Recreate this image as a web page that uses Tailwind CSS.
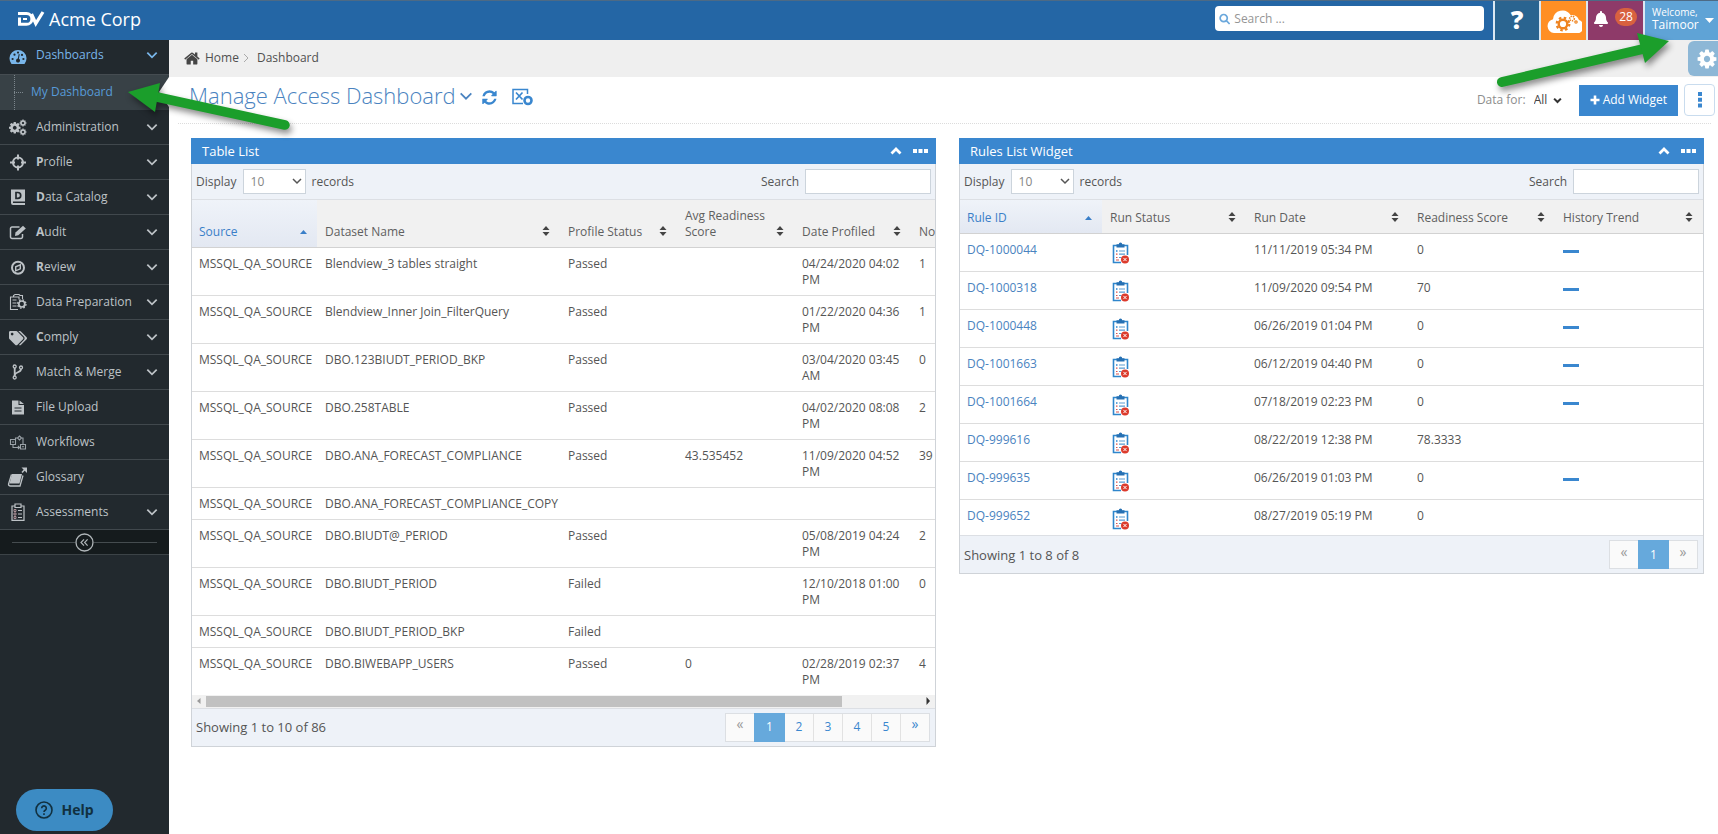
<!DOCTYPE html>
<html lang="en">
<head>
  <meta charset="UTF-8">
  <meta name="viewport" content="width=device-width, initial-scale=1.0">
  <title>Manage Access Dashboard</title>
  <script src="https://cdn.jsdelivr.net/npm/@tailwindcss/browser@4"></script>
</head>
<body class="relative flex flex-col min-h-screen bg-white text-[12px] leading-4 text-[#555] font-['Open_Sans',sans-serif]">

  <!-- Shared icons -->
  <svg class="hidden">
    <symbol id="down" viewBox="0 0 12 12"><path d="M2 4l4 4 4-4" fill="none" stroke="currentColor" stroke-width="1.500"/></symbol>
    <symbol id="up" viewBox="0 0 12 12"><path d="M1.500 8.500L6 4l4.500 4.500" fill="none" stroke="currentColor" stroke-width="2.800"/></symbol>
    <symbol id="dots" viewBox="0 0 16 4"><path d="M0 0h4v4H0zM5.500 0h4v4h-4zM11 0h4v4h-4z" fill="currentColor"/></symbol>
    <symbol id="sort" viewBox="0 0 8 10"><path d="M4 0l3.500 4h-7zM4 10L.5 6h7z" fill="currentColor"/></symbol>
    <symbol id="cog" viewBox="0 0 1792 1792"><path fill="currentColor" d="M1152 896q0-106-75-181t-181-75-181 75-75 181 75 181 181 75 181-75 75-181zm512-109v222q0 12-8 23t-20 13l-185 28q-19 54-39 91 35 50 107 138 10 12 10 25t-9 23q-27 37-99 108t-94 71q-12 0-26-9l-138-108q-44 23-91 38-16 136-29 186-7 28-36 28h-222q-14 0-24.500-8.500t-11.500-21.500l-28-184q-49-16-90-37l-141 107q-10 9-25 9-14 0-25-11-126-114-165-168-7-10-7-23 0-12 8-23 15-21 51-66.500t54-70.500q-27-50-41-99l-183-27q-13-2-21-12.500t-8-23.500v-222q0-12 8-23t19-13l186-28q14-46 39-92-40-57-107-138-10-12-10-24 0-10 9-23 26-36 98.500-107.500t94.500-71.500q13 0 26 10l138 107q44-23 91-38 16-136 29-186 7-28 36-28h222q14 0 24.500 8.500t11.500 21.500l28 184q49 16 90 37l142-107q9-9 24-9 13 0 25 10 129 119 165 170 7 8 7 22 0 12-8 23-15 21-51 66.500t-54 70.500q26 50 41 98l183 28q13 2 21 12.500t8 23.500z"/></symbol>
    <symbol id="failed-run" viewBox="0 0 17 22">
      <path d="M15.500 13V3.500h-14v17H9" fill="none" stroke="#2f86cc" stroke-width="1.600"/>
      <path d="M4.500 2.200h2.300a1.700 1.700 0 0 1 3.400 0h2.300v3.300h-8z" fill="#2670b3"/>
      <path d="M7 9h6M7 12.200h6M7 15.500h2.500" stroke="#5a9bd2" stroke-width="1.200"/>
      <path d="M4 9h1.500" stroke="#2f86cc" stroke-width="1.300"/>
      <path d="M4 12.200h1.500M4 15.500h1.500M4 18h3" stroke="#d9534f" stroke-width="1.200"/>
      <circle cx="13" cy="17.500" r="4" fill="#dc3a2c"/>
      <path d="M11.400 15.900l3.200 3.200m0-3.200l-3.200 3.200" stroke="#fff" stroke-width="1"/>
    </symbol>
  </svg>

  <!-- Top bar -->
  <header class="flex items-stretch h-10 bg-[#2466a5] border-t border-[#4d6a85] text-white">
    <a href="#" class="flex items-center gap-1 pl-[17px] pb-1 text-[18px] leading-6">
      <svg class="w-7 h-4" viewBox="0 0 28 16" fill="none" stroke="#fff">
        <path d="M1 2.500h8.500a5.200 5.200 0 0 1 0 10.800H2.500V6.500" stroke-width="3"/>
        <path d="M6 8h4" stroke-width="2"/>
        <path d="M14.500 3l4.300 9.500L26 1" stroke-width="3.200"/>
      </svg>
      Acme Corp
    </a>
    <label class="flex items-center gap-1 ml-auto mr-[9px] mt-[5px] w-[269px] h-[25px] px-1 rounded-sm bg-white">
      <svg class="w-3 h-3 text-[#6ba8dc]" viewBox="0 0 12 12" fill="none" stroke="currentColor" stroke-width="1.800"><circle cx="5" cy="5" r="3.800"/><path d="M7.800 7.800l3.500 3.500"/></svg>
      <input type="text" aria-label="Search" placeholder="Search ..." class="w-full text-[#555] placeholder:text-[#959595] outline-none">
    </label>
    <button aria-label="Help topics" class="w-[46px] pb-1 bg-[#2a6490] border-l-2 border-[#dbe8f3] text-[25px] font-extrabold">?</button>
    <button aria-label="Cloud services" class="flex items-center justify-center w-[47px] bg-[#ff8f24] border-l-2 border-[#dbe8f3]">
      <svg class="w-9 h-6" viewBox="0 0 36 24">
        <path d="M8 24a7 7 0 0 1-1-13.800A9.500 9.500 0 0 1 24.500 6 8 8 0 0 1 33 11a6.800 6.800 0 0 1-4.500 13z" fill="#fff"/>
        <g stroke="#ef8420" fill="none">
          <circle cx="17" cy="15" r="4.300" stroke-width="2.400"/>
          <circle cx="17" cy="15" r="6.300" stroke-width="2.200" stroke-dasharray="2.500 2.450"/>
          <circle cx="26" cy="9.500" r="2.300" stroke-width="1.600" stroke-dasharray="1.300 .8"/>
          <circle cx="30" cy="13" r="1.200" stroke-width="1.200"/>
        </g>
      </svg>
    </button>
    <button aria-label="Notifications" class="flex items-center justify-center gap-[7px] w-[57px] pb-1 bg-[#8e3a69] border-l-2 border-[#dbe8f3]">
      <svg class="w-[14px] h-4" viewBox="0 0 448 512" fill="#fff"><path d="M224 512c35.320 0 63.970-28.650 63.970-64H160.030c0 35.350 28.650 64 63.970 64zm215.390-149.710c-19.320-20.760-55.470-51.990-55.470-154.290 0-77.700-54.480-139.900-127.940-155.160V32c0-17.670-14.320-32-31.980-32s-31.980 14.330-31.980 32v20.840C118.560 68.100 64.080 130.300 64.080 208c0 102.300-36.150 133.530-55.470 154.290-6 6.450-8.660 14.160-8.610 21.710.11 16.400 12.980 32 32.100 32h383.800c19.120 0 32-15.600 32.100-32 .05-7.550-2.610-15.270-8.610-21.710z"/></svg>
      <span class="px-1 rounded-full bg-[#d8613f] text-[12px] leading-[18px] mb-1">28</span>
    </button>
    <button class="flex items-center justify-between w-[75px] pl-[7px] pr-1 bg-[#5fa3d6] border-l-2 border-[#dbe8f3] text-left">
      <span class="pb-1"><span class="block text-[10px] leading-3">Welcome,</span><span class="block leading-[14px]">Taimoor</span></span>
      <svg class="w-[9px] h-[5px]" viewBox="0 0 9 5"><path d="M0 0h9L4.500 5z" fill="#fff"/></svg>
    </button>
  </header>

  <div class="flex flex-1">

    <!-- Sidebar -->
    <nav class="w-[169px] shrink-0 bg-[#22292e] text-[#bdc2c6]">
      <ul>
        <li>
          <a href="#" class="flex items-center h-[35px] pl-[9px] pr-[10px] pb-1 text-[#79b6ea] border-b border-[#454c51]">
            <svg class="w-[18px] h-[18px] mt-1 mr-[9px]" viewBox="0 0 18 18"><path d="M2.500 16A8.500 8.500 0 1 1 15.500 16z" fill="currentColor"/><g fill="#22292e"><circle cx="3.600" cy="11" r="1.100"/><circle cx="5.500" cy="6.700" r="1.100"/><circle cx="9" cy="4.600" r="1.100"/><circle cx="14.400" cy="11" r="1.100"/><circle cx="13" cy="6.900" r="1.100"/><path d="M9.700 6l1 .2-.8 4.600a2 2 0 1 1-1-.2z"/></g></svg>
            <span class="flex-1">Dashboards</span>
            <svg class="w-[14px] h-[14px]"><use href="#down"/></svg>
          </a>
          <div class="relative flex items-center h-[35px] pl-[14px] bg-[#384146]">
            <span class="self-stretch w-2 border-l border-dotted border-[#7c868c]"></span>
            <span class="w-[9px] -ml-2 border-t border-dotted border-[#7c868c]"></span>
            <a href="#" class="pl-2 pb-[2px] text-[#579bd8]">My Dashboard</a>
            <svg class="absolute right-0 top-[2px] w-[10px] h-[30px]" viewBox="0 0 10 30"><path d="M10 0v30L0 15z" fill="#fff"/></svg>
          </div>
        </li>
        <li><a href="#" class="flex items-center h-[35px] pl-[9px] pr-[10px] border-b border-[#41484d]">
          <svg class="w-[18px] h-[18px] mr-[9px]" viewBox="0 0 18 18"><use href="#cog" x="-1" y="3" width="13.500" height="13.500"/><use href="#cog" x="10" y="1" width="8" height="8"/><use href="#cog" x="10" y="10" width="8" height="8"/></svg>
          <span class="flex-1">Administration</span><svg class="w-[14px] h-[14px]"><use href="#down"/></svg></a></li>
        <li><a href="#" class="flex items-center h-[35px] pl-[9px] pr-[10px] border-b border-[#41484d]">
          <svg class="w-[18px] h-[18px] mr-[9px]" viewBox="0 0 18 18" fill="none" stroke="currentColor" stroke-width="2"><circle cx="9" cy="9.500" r="5"/><path d="M9 1.500v5M9 12.500v5M1 9.500h5M12 9.500h5"/></svg>
          <span class="flex-1"><b>P</b>rofile</span><svg class="w-[14px] h-[14px]"><use href="#down"/></svg></a></li>
        <li><a href="#" class="flex items-center h-[35px] pl-[9px] pr-[10px] border-b border-[#41484d]">
          <svg class="w-[18px] h-[18px] mr-[9px]" viewBox="0 0 18 18"><path d="M2 1.500h14v12H4v1.500h12v2H4a2 2 0 0 1-2-2z" fill="currentColor"/><path d="M7 4.500h1.800a2.900 2.900 0 0 1 0 5.800H7z" fill="none" stroke="#22292e" stroke-width="1.700"/></svg>
          <span class="flex-1"><b>D</b>ata Catalog</span><svg class="w-[14px] h-[14px]"><use href="#down"/></svg></a></li>
        <li><a href="#" class="flex items-center h-[35px] pl-[9px] pr-[10px] border-b border-[#41484d]">
          <svg class="w-[18px] h-[18px] mr-[9px]" viewBox="0 0 18 18" fill="none" stroke="currentColor"><path d="M10.500 4H3a1.500 1.500 0 0 0-1.500 1.500V14A1.500 1.500 0 0 0 3 15.500h9a1.500 1.500 0 0 0 1.500-1.500v-3" stroke-width="1.500"/><path d="M6.500 9.500l7.500-6.800 2.800 2.700-7.500 6.800-3.300.8z" fill="currentColor" stroke="none"/></svg>
          <span class="flex-1"><b>A</b>udit</span><svg class="w-[14px] h-[14px]"><use href="#down"/></svg></a></li>
        <li><a href="#" class="flex items-center h-[35px] pl-[9px] pr-[10px] border-b border-[#41484d]">
          <svg class="w-[18px] h-[18px] mr-[9px]" viewBox="0 0 18 18" fill="none" stroke="currentColor"><circle cx="9" cy="9.700" r="6" stroke-width="2"/><path d="M11.300 6.800v4l-4.600 2v-4z" stroke-width="1.400"/></svg>
          <span class="flex-1"><b>R</b>eview</span><svg class="w-[14px] h-[14px]"><use href="#down"/></svg></a></li>
        <li><a href="#" class="flex items-center h-[35px] pl-[9px] pr-[10px] border-b border-[#41484d]">
          <svg class="w-[18px] h-[18px] mr-[9px]" viewBox="0 0 18 18" fill="none" stroke="currentColor" stroke-width="1.100"><path d="M4.500 4V2.500l1.500-1h4l1 1h2.500V6M9 16.500H1.500V4h8.500v2.500M3.500 7h4M3.500 10h4M3.500 13h4"/><circle cx="12.800" cy="11" r="3" stroke-width="1.700"/><circle cx="12.800" cy="11" r="4.200" stroke-width="1.300" stroke-dasharray="1.700 1.600"/></svg>
          <span class="flex-1">Data Preparation</span><svg class="w-[14px] h-[14px]"><use href="#down"/></svg></a></li>
        <li><a href="#" class="flex items-center h-[35px] pl-[9px] pr-[10px] border-b border-[#41484d]">
          <svg class="w-[18px] h-[18px] mr-[9px]" viewBox="0 -40 640 512" fill="currentColor"><path d="M497.941 225.941L286.059 14.059A48 48 0 0 0 252.118 0H48C21.490 0 0 21.490 0 48v204.118a48 48 0 0 0 14.059 33.941l211.882 211.882c18.744 18.745 49.136 18.746 67.882 0l204.118-204.118c18.745-18.745 18.745-49.137 0-67.882zM112 160c-26.510 0-48-21.490-48-48s21.490-48 48-48 48 21.490 48 48-21.490 48-48 48zm513.941 133.823L421.823 497.941c-18.745 18.745-49.137 18.745-67.882 0l-.36-.36L527.640 323.522c16.999-16.999 26.362-39.600 26.362-63.640s-9.362-46.641-26.362-63.640L331.397 0h48.721a48 48 0 0 1 33.941 14.059l211.882 211.882c18.745 18.745 18.745 49.137 0 67.882z"/></svg>
          <span class="flex-1"><b>C</b>omply</span><svg class="w-[14px] h-[14px]"><use href="#down"/></svg></a></li>
        <li><a href="#" class="flex items-center h-[35px] pl-[9px] pr-[10px] border-b border-[#41484d]">
          <svg class="w-[18px] h-[18px] mr-[9px]" viewBox="0 0 18 18" fill="none" stroke="currentColor"><g stroke-width="1.300"><circle cx="5.700" cy="3.500" r="1.500"/><circle cx="12" cy="4.500" r="1.500"/><circle cx="5.700" cy="14.500" r="1.500"/></g><path d="M5.700 5v8M12 6c0 4-5.500 2.500-6.300 6" stroke-width="1.800"/></svg>
          <span class="flex-1">Match &amp; Merge</span><svg class="w-[14px] h-[14px]"><use href="#down"/></svg></a></li>
        <li><a href="#" class="flex items-center h-[35px] pl-[9px] pr-[10px] border-b border-[#41484d]">
          <svg class="w-[18px] h-[18px] mr-[9px]" viewBox="0 0 18 18"><path d="M3 2.500h6.500V7H15v9.500H3zM10.500 2.500L15 6h-4.500z" fill="currentColor"/><path d="M5.500 10h7M5.500 13h7" stroke="#22292e" stroke-width="1.200"/></svg>
          <span class="flex-1">File Upload</span></a></li>
        <li><a href="#" class="flex items-center h-[35px] pl-[9px] pr-[10px] border-b border-[#41484d]">
          <svg class="w-[18px] h-[18px] mr-[9px]" viewBox="0 0 18 18" fill="none" stroke="#9aa2a8" stroke-width="1.100"><path d="M1.500 6.500h5v5h-5zM11.500 11.500h5v4.500h-5zM6.500 7.500V5h2M4 11.500v3h6.500M12.500 5H14v6M10.500 3l2 2-2 2-2-2zM3 9h2M13 13.700h2M9 13l1.500 1.500L9 16"/></svg>
          <span class="flex-1">Workflows</span></a></li>
        <li><a href="#" class="flex items-center h-[35px] pl-[7px] pr-[10px] border-b border-[#41484d]">
          <svg class="w-5 h-5 mr-[9px]" viewBox="0 0 20 20"><path d="M5 7h10l-2.500 9.500H2.500z" fill="currentColor"/><path d="M4.500 7.500L1.500 17q0 2 2 2h9.500L16 8.500" fill="none" stroke="currentColor" stroke-width="1.300"/><path d="M15 5.500l3.500-3.700" stroke="currentColor" stroke-width="1.600"/><path d="M14.500.5H20V6z" fill="currentColor"/></svg>
          <span class="flex-1">Glossary</span></a></li>
        <li><a href="#" class="flex items-center h-[35px] pl-[9px] pr-[10px] border-b border-[#41484d]">
          <svg class="w-[18px] h-[18px] mr-[9px]" viewBox="0 0 18 18" fill="none" stroke="currentColor"><path d="M6 3H3v14.300h12V3h-3M6 1h6v3.500H6zM9 7.500h4M9 11h4M9 14.500h4" stroke-width="1.200"/><path d="M5 6.500h2v2H5zM5 10h2v2H5zM5 13.500h2v2H5z" stroke="#b99aa0" stroke-width=".9"/></svg>
          <span class="flex-1">Assessments</span><svg class="w-[14px] h-[14px]"><use href="#down"/></svg></a></li>
      </ul>
      <div class="flex items-center h-[25px] px-3 bg-[#151b1d] border-b border-[#3c4347]">
        <span class="flex-1 border-t border-[#454c4f]"></span>
        <button aria-label="Collapse menu">
          <svg class="w-[19px] h-[19px]" viewBox="0 0 19 19" fill="none" stroke="#b0b6b9"><circle cx="9.500" cy="9.500" r="8.500" stroke-width="1.300"/><path d="M9 6.300L6 9.500l3 3.200M12.600 6.300l-3 3.200 3 3.200" stroke-width="1.200"/></svg>
        </button>
        <span class="flex-1 border-t border-[#454c4f]"></span>
      </div>
    </nav>

    <!-- Content -->
    <main class="flex-1 min-w-0">
      <div class="flex items-center h-[37px] pl-[15px] pb-[2px] bg-[#efefef] text-[#4f4f4f]">
        <svg class="w-4 h-4 mr-[5px]" viewBox="50 100 1700 1500" fill="#454545"><path d="M1472 992v480q0 26-19 45t-45 19h-384v-384h-256v384h-384q-26 0-45-19t-19-45v-480q0-1 .5-3t.5-3l575-474 575 474q1 2 1 6zm223-69l-62 74q-8 9-21 11h-3q-13 0-21-7l-692-577-692 577q-12 8-24 7-13-2-21-11l-62-74q-8-10-7-23.500t11-21.500l719-599q32-26 76-26t76 26l244 204v-195q0-14 9-23t23-9h192q14 0 23 9t9 23v408l219 182q10 8 11 21.500t-7 23.500z"/></svg>
        <a href="#">Home</a>
        <svg class="w-[6px] h-2 ml-1 mr-2" viewBox="0 0 6 8" fill="none" stroke="#aaa"><path d="M1 0l4 4-4 4"/></svg>
        <span>Dashboard</span>
      </div>

      <div class="flex items-center ml-[9px] mr-[7px] pl-[11px] h-[47px] border-b border-dotted border-[#dcdcdc] text-[#4a83c0]">
        <h1 class="pb-[10px] text-[22px] leading-7 font-light">Manage Access Dashboard</h1>
        <svg class="w-4 h-4 mb-2 ml-[2px]" viewBox="0 0 12 12"><path d="M2 4l4 4 4-4" fill="none" stroke="currentColor" stroke-width="1.300"/></svg>
        <button aria-label="Refresh" class="ml-2"><svg class="w-[15px] h-[15px] mb-[5px] text-[#3a87cf]" viewBox="100 100 1600 1600" fill="currentColor"><path d="M1639 1056q0 5-1 7-64 268-268 434.500t-478 166.500q-146 0-282.500-55t-243.500-157l-129 129q-19 19-45 19t-45-19-19-45v-448q0-26 19-45t45-19h448q26 0 45 19t19 45-19 45l-137 137q71 66 161 102t187 36q134 0 250-65t186-179q11-17 53-117 8-23 30-23h192q13 0 22.500 9.500t9.500 22.500zm25-800v448q0 26-19 45t-45 19h-448q-26 0-45-19t-19-45 19-45l138-138q-148-137-349-137-134 0-250 65t-186 179q-11 17-53 117-8 23-30 23h-199q-13 0-22.500-9.500t-9.500-22.500v-7q65-268 270-434.500t480-166.500q146 0 284 55.500t245 156.500l130-129q19-19 45-19t45 19 19 45z"/></svg></button>
        <button aria-label="Export to Excel" class="ml-[15px]"><svg class="w-[21px] h-[18px] mb-[6px] text-[#3a87cf]" viewBox="0 0 21 18" fill="none" stroke="currentColor"><path d="M15.500 6V1.500H1v14h10" stroke-width="1.500"/><path d="M4 4.500l6.500 7M10.500 4.500L4 11.500" stroke-width="1.700"/><circle cx="16" cy="12.500" r="3.500" stroke-width="2.600"/></svg></button>

        <label for="dataFor" class="ml-auto text-[12px] text-[#8d8d8d]">Data for:</label>
        <span class="relative ml-2">
          <select id="dataFor" class="w-7 appearance-none text-[12px] text-[#444] outline-none"><option>All</option></select>
          <svg class="absolute right-0 top-1 w-[9px] h-[9px] text-[#333]"><use href="#up" transform="rotate(180 4.500 4.500)"/></svg>
        </span>
        <button class="flex items-center gap-[3px] ml-[17px] h-[31px] px-[11px] bg-[#3a87cf] text-white"><svg class="w-[10px] h-[10px]" viewBox="0 0 10 10"><path d="M5 .5v9M.5 5h9" stroke="#fff" stroke-width="2.600"/></svg>Add Widget</button>
        <button aria-label="More options" class="flex items-center justify-center ml-[6px] -mr-1 w-[31px] h-8 rounded-sm border border-[#c9dcee]"><svg class="w-1 h-4" viewBox="0 0 4 16"><path d="M0 0h4v4H0zM0 5.700h4v4H0zM0 11.400h4v4H0z" fill="#3a87cf"/></svg></button>
      </div>

      <div class="grid grid-cols-2 items-start gap-[23px] pl-[22px] pr-[14px] pt-[14px]">

        <!-- Table List -->
        <section class="border border-t-0 border-[#cfd3d8]">
          <div class="flex items-center h-[26px] px-[11px] -mx-px bg-[#3a87cf] text-white">
            <h2 class="flex-1 text-[13px] font-medium">Table List</h2>
            <button aria-label="Collapse Table List"><svg class="w-3 h-3 mr-[11px]"><use href="#up"/></svg></button>
            <button aria-label="Table List options"><svg class="w-4 h-1 -mr-1"><use href="#dots"/></svg></button>
          </div>
          <div class="flex items-center h-9 px-1 bg-[#eef2f8] border-b border-[#dcdfe4]">
            <label for="tableSize">Display</label>
            <span class="relative ml-[6px] mr-[6px]">
              <select id="tableSize" class="w-[63px] h-[25px] pl-[7px] appearance-none bg-white border border-[#ccd4dc] text-[#858585]"><option>10</option></select>
              <svg class="absolute right-[3px] top-[6px] w-3 h-3 text-[#555]"><use href="#down"/></svg>
            </span>
            <span>records</span>
            <label for="tableSearch" class="ml-auto mr-[6px]">Search</label>
            <input id="tableSearch" type="text" class="w-[126px] h-[25px] px-1 bg-white border border-[#ccd4dc]">
          </div>
          <div class="overflow-hidden">
            <table class="table-fixed w-full min-w-[838px] text-left">
              <colgroup><col class="w-[125px]"><col class="w-[243px]"><col class="w-[117px]"><col class="w-[117px]"><col class="w-[117px]"><col></colgroup>
              <thead><tr id="tableHead" class="h-[47px] align-bottom bg-[#f1f1f1] border-b border-[#d2d2d2]"></tr></thead>
              <tbody id="tableRows"></tbody>
            </table>
          </div>
          <!-- Horizontal scroll bar -->
          <div class="flex items-center h-[13px] bg-[#f1f1f1]">
            <svg class="w-[14px] h-2" viewBox="0 0 14 8"><path d="M8.500 1v6L5 4z" fill="#9a9a9a"/></svg>
            <span class="flex-1"><span class="block w-[89%] h-[11px] bg-[#c1c1c1]"></span></span>
            <svg class="w-[14px] h-2" viewBox="0 0 14 8"><path d="M5.500 0v8L9 4z" fill="#333"/></svg>
          </div>
          <div class="flex items-center justify-between h-[38px] px-1 bg-[#eef2f8] border-t border-[#dcdfe4]">
            <span class="text-[13px]">Showing 1 to 10 of 86</span>
            <div class="flex h-[29px] border border-[#dcdfe3] bg-[#fafafa] text-[#3a87cf] mr-[1px]">
              <button disabled class="w-7 pb-[6px] text-[14px] text-[#999]">«</button>
              <button class="w-[31px] -my-px bg-[#66a9dc] text-white">1</button>
              <button class="w-7">2</button>
              <button class="w-[29px] border-l border-[#e2e2e2]">3</button>
              <button class="w-[29px] border-l border-[#e2e2e2]">4</button>
              <button class="w-[29px] border-l border-[#e2e2e2]">5</button>
              <button class="w-[29px] pb-[6px] border-l border-[#e2e2e2] text-[14px]">»</button>
            </div>
          </div>
        </section>

        <!-- Rules List Widget -->
        <section class="border border-t-0 border-[#cfd3d8]">
          <div class="flex items-center h-[26px] px-[11px] -mx-px bg-[#3a87cf] text-white">
            <h2 class="flex-1 text-[13px] font-medium">Rules List Widget</h2>
            <button aria-label="Collapse Rules List Widget"><svg class="w-3 h-3 mr-[11px]"><use href="#up"/></svg></button>
            <button aria-label="Rules List Widget options"><svg class="w-4 h-1 -mr-1"><use href="#dots"/></svg></button>
          </div>
          <div class="flex items-center h-9 px-1 bg-[#eef2f8] border-b border-[#dcdfe4]">
            <label for="rulesSize">Display</label>
            <span class="relative ml-[6px] mr-[6px]">
              <select id="rulesSize" class="w-[63px] h-[25px] pl-[7px] appearance-none bg-white border border-[#ccd4dc] text-[#858585]"><option>10</option></select>
              <svg class="absolute right-[3px] top-[6px] w-3 h-3 text-[#555]"><use href="#down"/></svg>
            </span>
            <span>records</span>
            <label for="rulesSearch" class="ml-auto mr-[6px]">Search</label>
            <input id="rulesSearch" type="text" class="w-[126px] h-[25px] px-1 bg-white border border-[#ccd4dc]">
          </div>
          <table class="table-fixed w-full text-left">
            <colgroup><col class="w-[142px]"><col class="w-[144px]"><col class="w-[163px]"><col class="w-[146px]"><col></colgroup>
            <thead><tr id="rulesHead" class="h-[33px] align-bottom bg-[#f1f1f1] border-b border-[#d2d2d2]"></tr></thead>
            <tbody id="rulesRows"></tbody>
          </table>
          <div class="flex items-center justify-between h-[38px] px-1 bg-[#eef2f8] border-t border-[#dcdfe4]">
            <span class="text-[13px]">Showing 1 to 8 of 8</span>
            <div class="flex h-[29px] border border-[#dcdfe3] bg-[#fafafa] mr-[1px]">
              <button disabled class="w-7 pb-[6px] text-[14px] text-[#999]">«</button>
              <button class="w-[31px] -my-px bg-[#66a9dc] text-white">1</button>
              <button disabled class="w-7 pb-[6px] text-[14px] text-[#999]">»</button>
            </div>
          </div>
        </section>
      </div>
    </main>
  </div>

  <!-- Settings tab -->
  <button aria-label="Settings" class="absolute right-0 top-[41px] flex items-center justify-center w-[30px] h-[35px] pl-2 rounded-l-md bg-[#8db7d6] text-white"><svg class="w-[22px] h-[22px] shrink-0"><use href="#cog"/></svg></button>

  <!-- Help launcher -->
  <button class="absolute left-4 bottom-[3px] flex items-center justify-center gap-2 w-[97px] h-[42px] rounded-full bg-[#3c8bc3] text-[#11303f] text-[14px] font-bold">
    <svg class="w-[18px] h-[18px]" viewBox="0 0 18 18" fill="none" stroke="currentColor" stroke-width="1.600"><circle cx="9" cy="9" r="8"/><path d="M6.700 7.200a2.300 2.300 0 1 1 3.500 2c-.8.500-1.200.8-1.200 1.700M9 12.300v1.700"/></svg>
    Help
  </button>

  <!-- Callout arrows -->
  <svg class="absolute left-[120px] top-[76px] w-[180px] h-[64px] pointer-events-none drop-shadow-[2px_4px_3px_rgba(0,0,0,0.45)]" viewBox="120 76 180 64">
    <path d="M157 97L285 125" stroke="#1b9e2b" stroke-width="9.500" stroke-linecap="round"/><path d="M128 92l32-9-5 29z" fill="#1b9e2b"/>
  </svg>
  <svg class="absolute right-[38px] top-[26px] w-[190px] h-[70px] pointer-events-none drop-shadow-[2px_4px_3px_rgba(0,0,0,0.45)]" viewBox="1490 26 190 70">
    <path d="M1502 82L1643 49" stroke="#1b9e2b" stroke-width="10" stroke-linecap="round"/><path d="M1669 41l-32-8 8 30z" fill="#1b9e2b"/>
  </svg>

  <script>
    const tableColumns = ["Source", "Dataset Name", "Profile Status", "Avg Readiness Score", "Date Profiled", "No"];
    const tableData = [
      ["MSSQL_QA_SOURCE", "Blendview_3 tables straight", "Passed", "", "04/24/2020 04:02 PM", "1"],
      ["MSSQL_QA_SOURCE", "Blendview_Inner Join_FilterQuery", "Passed", "", "01/22/2020 04:36 PM", "1"],
      ["MSSQL_QA_SOURCE", "DBO.123BIUDT_PERIOD_BKP", "Passed", "", "03/04/2020 03:45 AM", "0"],
      ["MSSQL_QA_SOURCE", "DBO.258TABLE", "Passed", "", "04/02/2020 08:08 PM", "2"],
      ["MSSQL_QA_SOURCE", "DBO.ANA_FORECAST_COMPLIANCE", "Passed", "43.535452", "11/09/2020 04:52 PM", "39"],
      ["MSSQL_QA_SOURCE", "DBO.ANA_FORECAST_COMPLIANCE_COPY", "", "", "", ""],
      ["MSSQL_QA_SOURCE", "DBO.BIUDT@_PERIOD", "Passed", "", "05/08/2019 04:24 PM", "2"],
      ["MSSQL_QA_SOURCE", "DBO.BIUDT_PERIOD", "Failed", "", "12/10/2018 01:00 PM", "0"],
      ["MSSQL_QA_SOURCE", "DBO.BIUDT_PERIOD_BKP", "Failed", "", "", ""],
      ["MSSQL_QA_SOURCE", "DBO.BIWEBAPP_USERS", "Passed", "0", "02/28/2019 02:37 PM", "4"]
    ];

    const rulesColumns = ["Rule ID", "Run Status", "Run Date", "Readiness Score", "History Trend"];
    const rulesData = [
      ["DQ-1000044", "11/11/2019 05:34 PM", "0", true],
      ["DQ-1000318", "11/09/2020 09:54 PM", "70", true],
      ["DQ-1000448", "06/26/2019 01:04 PM", "0", true],
      ["DQ-1001663", "06/12/2019 04:40 PM", "0", true],
      ["DQ-1001664", "07/18/2019 02:23 PM", "0", true],
      ["DQ-999616", "08/22/2019 12:38 PM", "78.3333", false],
      ["DQ-999635", "06/26/2019 01:03 PM", "0", true],
      ["DQ-999652", "08/27/2019 05:19 PM", "0", false]
    ];

    // The first column is the sorted one
    function headCell(name, i) {
      if (i === 0) {
        return `<th class="px-[7px] pb-[7px] font-medium text-[#3a7fc8] bg-linear-to-b from-[#eff3f9] to-[#e3e8f2]"><div class="flex items-center justify-between">${name}<svg class="w-[7px] h-1 mr-[3px]" viewBox="0 0 7 4"><path d="M3.500 0L7 4H0z" fill="currentColor"/></svg></div></th>`;
      }
      return `<th class="px-2 pb-[7px] font-medium text-[#5f5f5f]"><div class="flex items-end justify-between">${name}<svg class="w-2 h-[10px] mb-1 mr-[2px] shrink-0 text-[#444]"><use href="#sort"/></svg></div></th>`;
    }

    document.getElementById("tableHead").innerHTML = tableColumns.map(headCell).join("");
    document.getElementById("rulesHead").innerHTML = rulesColumns.map(headCell).join("");

    document.getElementById("tableRows").innerHTML = tableData.map(row => `
      <tr class="align-top border-b border-[#ddd] last:border-b-0">
        ${row.map((cell, i) => `<td class="${i === 0 ? "pl-[7px]" : "pl-2 pr-1"} pt-2 pb-[7px]">${cell}</td>`).join("")}
      </tr>`).join("");

    document.getElementById("rulesRows").innerHTML = rulesData.map(([id, date, score, trend]) => `
      <tr class="h-[38px] align-top border-b border-[#ddd] last:h-[36px] last:border-b-0">
        <td class="pl-[7px] pt-2"><a href="#" class="text-[#4a83c0]">${id}</a></td>
        <td class="pl-[10px] pt-2"><svg class="w-[17px] h-[22px]"><use href="#failed-run"/></svg></td>
        <td class="pl-2 pt-2">${date}</td>
        <td class="pl-2 pt-2">${score}</td>
        <td class="pl-2 pt-4">${trend ? '<span class="block w-4 h-[3px] bg-[#3a87cf]"></span>' : ""}</td>
      </tr>`).join("");
  </script>

</body>
</html>
